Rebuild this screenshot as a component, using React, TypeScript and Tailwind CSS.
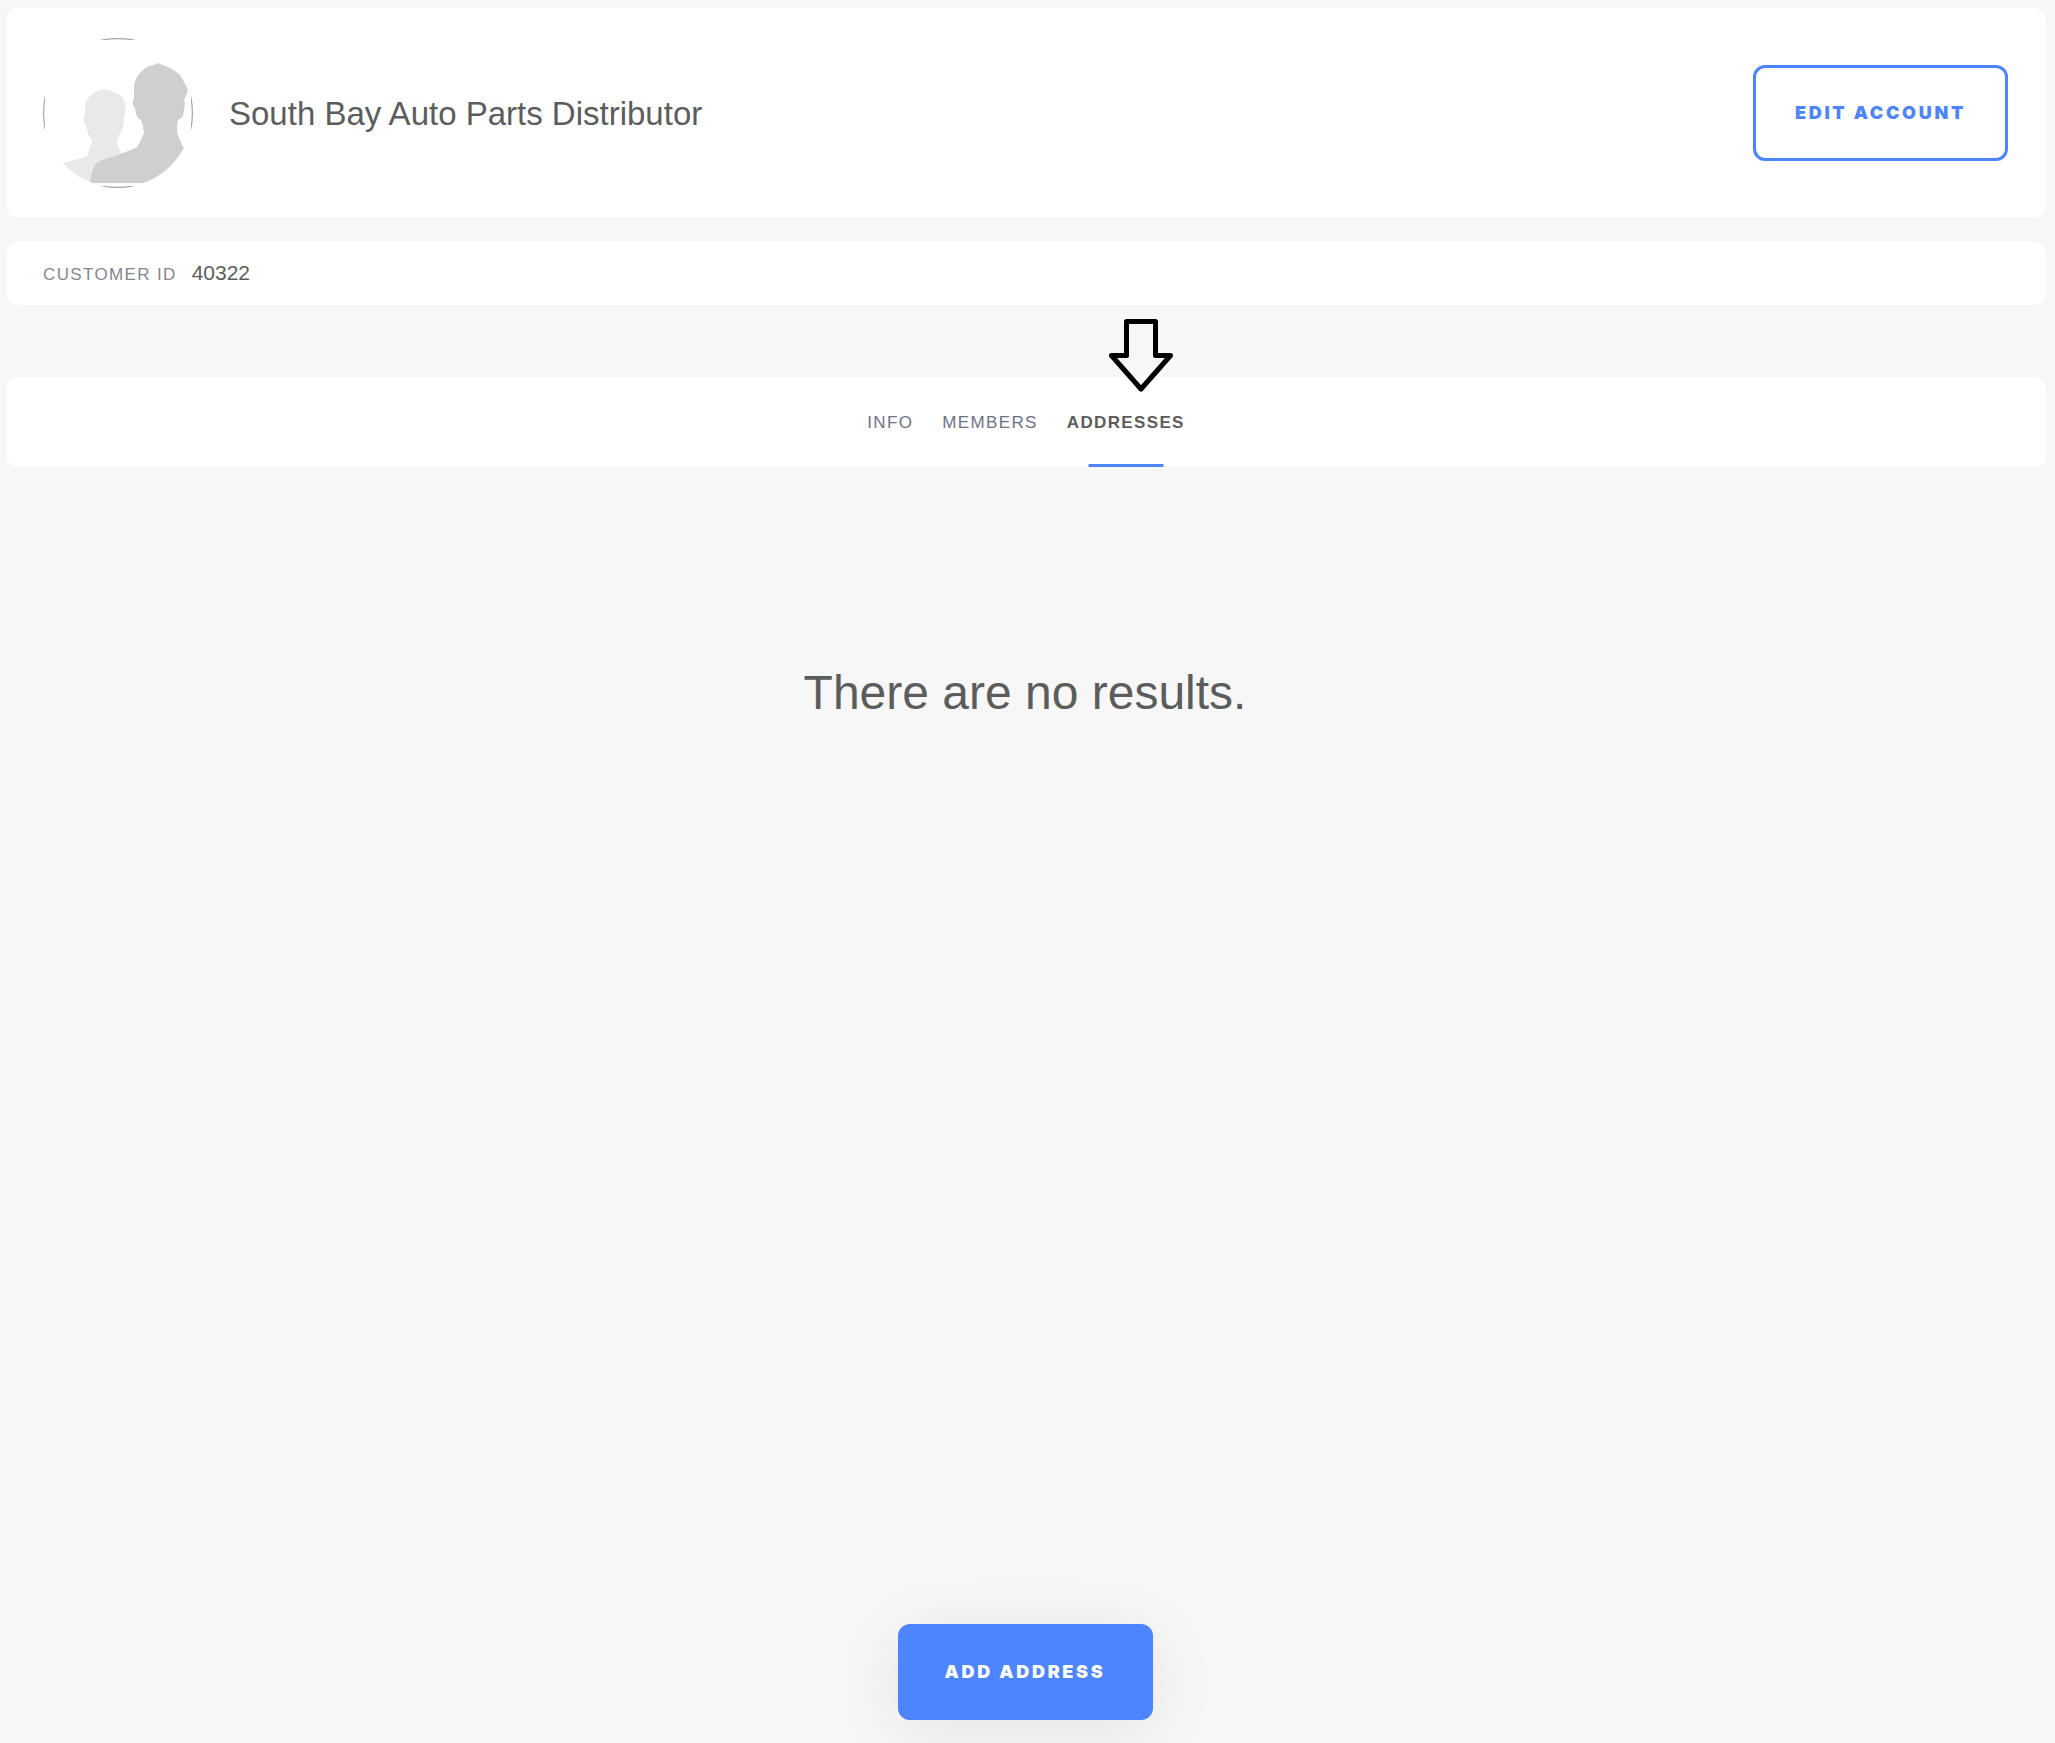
const tabs = ["Info", "Members", "Addresses"];

function Avatar() {
  return (
    <svg className="size-[150px] shrink-0" viewBox="0 0 150 150" role="img" aria-label="Account avatar">
      <defs>
        <clipPath id="avatar-circle">
          <circle cx="75" cy="75" r="74.5" />
        </clipPath>
      </defs>
      <circle cx="75" cy="75" r="74.4" fill="none" stroke="#a6a6a6" strokeWidth="1.2" />
      <rect x="2" y="2" width="146" height="146" fill="#fff" />
      <g clipPath="url(#avatar-circle)">
        <path
          fill="#e9e9e9"
          d="M60 51L66 52L75 56C79 58 82 62 82 66L83 72L81 79L81 83L80 89C79 93 77 95 75 99L74 105C75 109 76 113 79 115L90 119V146H10V129C16 125 32 122 42 119C46 118 46 113 47 109L49 105V102C47 99 45 98 45 95L43 88L41 84L40 81L42 77V69C42 64 45 60 48 57C52 54 56 52 60 51Z"
        />
        <path
          fill="#cfcfcf"
          d="M115 25L119 27L125 29C131 32 136 35 139 40L142 46L145 52L143 58L141 62L142 66L141 71L140 78L138 80L135 82L134 87L134 94L136 100L140 109L146 112V146H47C48 140 49 132 52 127C54 124 58 123 62 121L72 118L80 115L88 112L94 109L97 104L99 99L101 95L100 88L98 82L95 80L93 76L92 70L90 67V63L91 60V47C92 42 94 38 97 35L101 31L106 28L111 27Z"
        />
        <rect x="2" y="145" width="146" height="3" fill="#fff" />
      </g>
    </svg>
  );
}

export default function App() {
  return (
    <div className="flex min-h-screen flex-col bg-[#f7f7f7] pt-2 pr-[9px] pb-[23px] pl-[6px] font-['Liberation_Sans',Arial,sans-serif] text-[#5b5d5c]">
      <header className="flex items-center gap-9 rounded-xl bg-white py-[30px] pr-[38px] pl-[37px]">
        <Avatar />
        <h1 className="flex-1 pt-0.5 text-[33px] leading-10">South Bay Auto Parts Distributor</h1>
        <button
          type="button"
          className="h-24 w-[255px] rounded-xl border-3 border-[#4d84ff] font-['Arial_Black',Inter,sans-serif] text-lg font-black tracking-[0.15em] text-[#4d84ff] uppercase"
        >
          Edit Account
        </button>
      </header>

      <dl className="mt-6 flex h-[63px] items-baseline gap-[15px] rounded-xl bg-white px-[37px] pt-[15px]">
        <dt className="text-[17px] tracking-[0.08em] text-[#85878f] uppercase">Customer ID</dt>
        <dd className="text-[21px] leading-8">40322</dd>
      </dl>

      <nav className="mt-[72px] flex h-[90px] justify-center gap-[29px] rounded-xl bg-white" aria-label="Account sections">
        {tabs.map((tab) =>
          tab === "Addresses" ? (
            <a
              key={tab}
              href="#addresses"
              aria-current="page"
              className="relative flex items-center pt-0.5 text-[17px] font-bold tracking-[0.08em] uppercase"
            >
              {tab}
              <span className="absolute bottom-0 left-1/2 h-[3px] w-[75px] -translate-x-1/2 bg-[#4d84ff]" />
              <svg
                className="absolute -top-[58px] left-[42px] h-[73px] w-16"
                viewBox="0 0 64 73"
                fill="none"
                stroke="#000"
                strokeWidth="5"
                strokeLinejoin="round"
                aria-hidden="true"
              >
                <path d="M17.5 2.5H46.500V36.500H61.500L32 70L2.500 36.500H17.500Z" />
              </svg>
            </a>
          ) : (
            <a
              key={tab}
              href={tab === "Info" ? "#info" : "#members"}
              className="flex items-center pt-0.5 text-[17px] tracking-[0.08em] text-[#6f7185] uppercase"
            >
              {tab}
            </a>
          ),
        )}
      </nav>

      <main className="flex flex-1 flex-col items-center justify-between pr-0.5">
        <p className="mt-[198px] text-5xl leading-14">There are no results.</p>
        <button
          type="button"
          className="h-24 w-[255px] rounded-xl bg-[#4d84ff] font-['Arial_Black',Inter,sans-serif] text-lg font-black tracking-[0.15em] text-white uppercase shadow-[0_12px_70px_rgba(0,0,0,0.08)]"
        >
          Add Address
        </button>
      </main>
    </div>
  );
}
